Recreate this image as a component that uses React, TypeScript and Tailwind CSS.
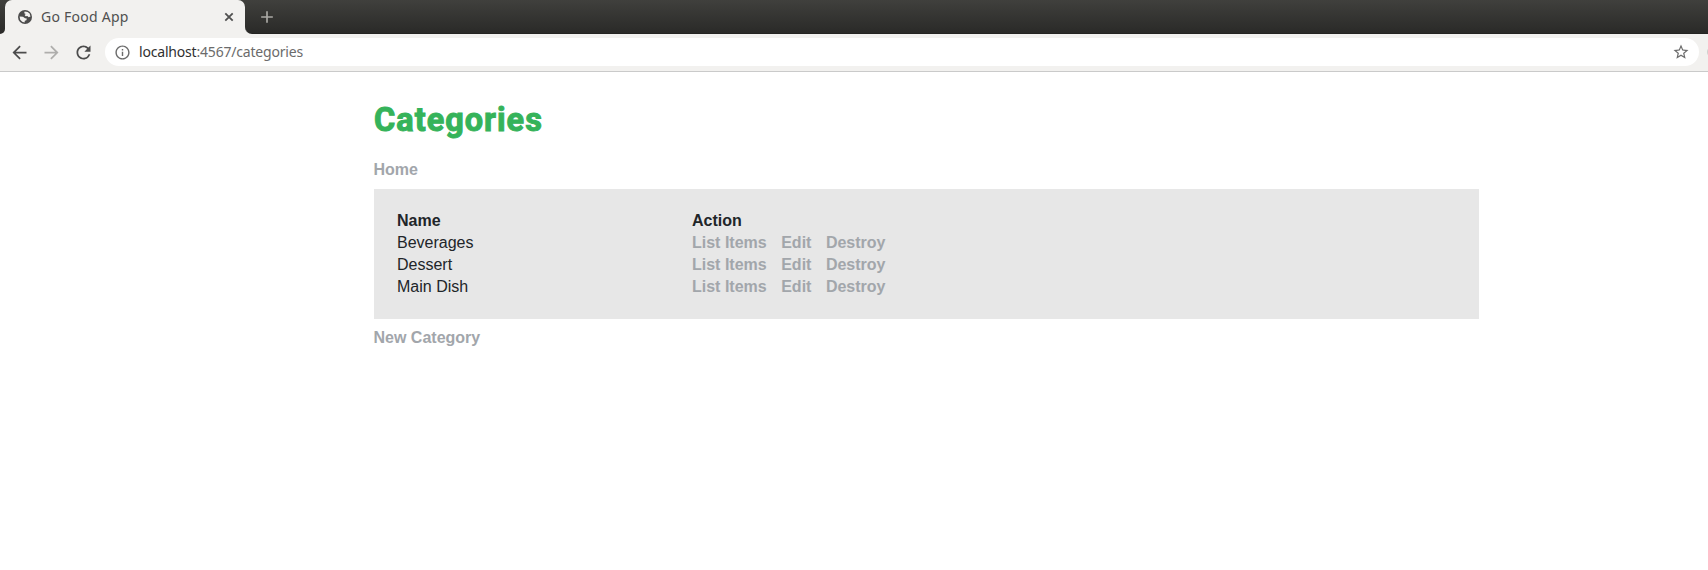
import { MdAdd, MdArrowBack, MdArrowForward, MdInfoOutline, MdRefresh, MdStarBorder } from "react-icons/md";

const categories = ["Beverages", "Dessert", "Main Dish"];
const actions = ["List Items", "Edit", "Destroy"];

function GlobeIcon() {
  return (
    <svg viewBox="0 0 14 14" className="size-[14px] shrink-0">
      <circle cx="7" cy="7" r="7" fill="#4c4c4c" />
      <path
        d="M6.6 1.6 L9.6 1.9 L11.6 3.6 L12.5 6.6 L10.6 7.2 L9.4 6 L7.6 6.2 L6.6 5 L7.8 4 L6.2 3.2 Z"
        fill="#f2f1ef"
      />
      <path
        d="M1.6 6.6 L5 6.8 L7 8.2 L8.8 8.6 L8.4 10.2 L6.8 10.8 L6.6 12.5 L4.2 11.8 L2.2 9.8 Z"
        fill="#f2f1ef"
      />
    </svg>
  );
}

function CloseIcon() {
  return (
    <svg viewBox="0 0 10 10" className="size-[10px] shrink-0" stroke="#505050" strokeWidth="1.8" fill="none">
      <path d="M1.3 1.3 8.7 8.7M8.7 1.3 1.3 8.7" />
    </svg>
  );
}

function TabStrip() {
  return (
    <div className="flex h-[34px] bg-linear-to-b from-[#40403d] to-[#2a2a28]">
      <div className="flex w-[5px] items-end bg-[#f2f1ef]">
        <div className="h-full w-full rounded-br-[6px] bg-linear-to-b from-[#40403d] to-[#2a2a28]" />
      </div>
      <div className="flex bg-linear-to-b from-[#40403d] to-[#2a2a28]">
        <div className="flex w-[240px] items-center rounded-t-[7px] bg-[#f2f1ef] pl-[13px] pr-[11px] text-[#505050]">
          <GlobeIcon />
          <span className="ml-[9px] grow whitespace-nowrap font-['Noto_Sans',sans-serif] text-[14px] leading-[20px] tracking-[0.25px]">Go Food App</span>
          <CloseIcon />
        </div>
      </div>
      <div className="flex grow bg-[#f2f1ef]">
        <div className="flex grow items-center rounded-bl-[7px] border-b border-[#242422] bg-linear-to-b from-[#40403d] to-[#2a2a28] pl-[12px] text-[#aaa9a5]">
          <MdAdd size={20} />
        </div>
      </div>
    </div>
  );
}

function Toolbar() {
  return (
    <div className="flex h-[38px] items-center overflow-hidden border-b border-[#cacaca] bg-[#f2f1ef] pb-px text-[#4c4c4c]">
      <MdArrowBack size={21} className="ml-[8.5px] shrink-0" />
      <MdArrowForward size={21} className="ml-[11px] shrink-0 text-[#afaeac]" />
      <MdRefresh size={21} className="ml-[11px] shrink-0" />
      <div className="ml-[11.5px] flex h-[28px] w-[1594px] shrink-0 items-center rounded-full bg-white pl-[9px] pr-[9px] text-[#6b6b6b]">
        <MdInfoOutline size={17} className="shrink-0" />
        <span className="ml-[8px] grow whitespace-nowrap font-['Noto_Sans',sans-serif] text-[14px] leading-[20px] tracking-[-0.19px]">
          <span className="text-[#303030]">localhost</span>:4567/categories
        </span>
        <MdStarBorder size={18} className="shrink-0" />
      </div>
      <div className="ml-[8px] size-[12px] shrink-0 rounded-full bg-[#d0d0ce]" />
    </div>
  );
}

function TextLink({ children }: { children: string }) {
  return <a className="font-bold text-[#a2a6ab]">{children}</a>;
}

export default function App() {
  return (
    <div className="h-[570px] overflow-hidden bg-white">
      <TabStrip />
      <Toolbar />
      <main className="ml-[373.5px] w-[1105.5px] pt-[28px] font-['Liberation_Sans',sans-serif] text-[16px] leading-[22px] text-[#212529]">
        <h1 className="h-[59px] whitespace-nowrap pl-[0.5px] font-['Roboto',sans-serif] text-[32.5px] font-bold leading-[40px] tracking-[1px] text-[#35b35a] [-webkit-text-stroke:1px_#35b35a]">Categories</h1>
        <div className="h-[30px]"><TextLink>Home</TextLink></div>
        <div className="h-[130px] bg-[#e7e7e7] px-[23.5px] py-[21px]">
          <div className="flex font-bold">
            <div className="w-[295px]">Name</div>
            <div>Action</div>
          </div>
          {categories.map((name) => (
            <div key={name} className="flex">
              <div className="w-[295px]">{name}</div>
              <div className="flex gap-[14.5px]">
                {actions.map((action) => <TextLink key={action}>{action}</TextLink>)}
              </div>
            </div>
          ))}
        </div>
        <div className="pt-[8px]"><TextLink>New Category</TextLink></div>
      </main>
    </div>
  );
}
